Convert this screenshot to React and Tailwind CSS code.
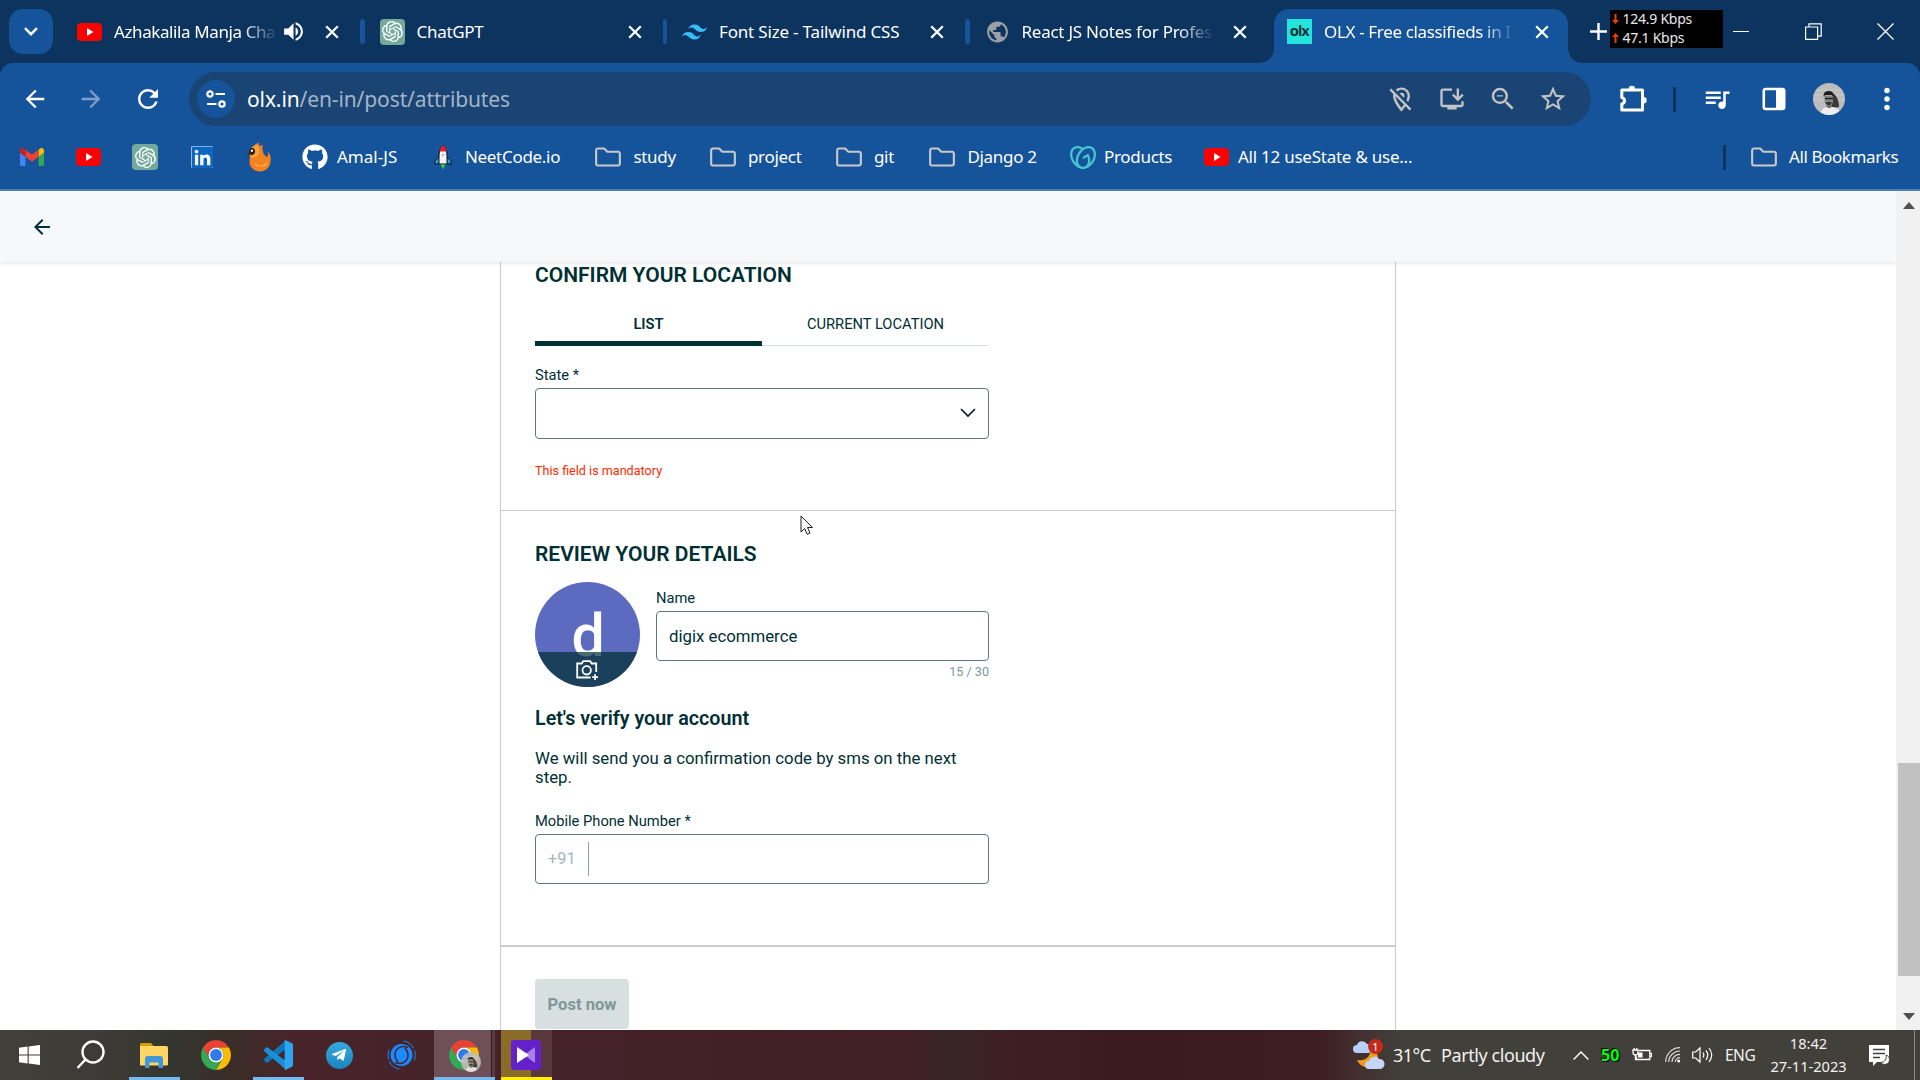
import React from "react";
import {
  MdArrowBack,
  MdArrowForward,
  MdRefresh,
  MdVolumeUp,
  MdOutlineLocationOff,
  MdInstallDesktop,
  MdZoomOut,
  MdStarBorder,
  MdQueueMusic,
  MdPublic,
  MdMoreVert,
} from "react-icons/md";
import { FaGithub, FaLinkedin, FaTelegramPlane } from "react-icons/fa";
import { SiOpenai, SiTailwindcss, SiGodaddy } from "react-icons/si";

/* ---------- shared icons ---------- */

const YouTube = () => (
  <svg width="25" height="18" viewBox="0 0 25 18">
    <rect width="25" height="18" rx="4" fill="#f00" />
    <path d="M10 5v8l6.5-4z" fill="#fff" />
  </svg>
);

const OpenAi = () => (
  <span className="flex size-[26px] items-center justify-center rounded-[4px] bg-[#74aa9c]">
    <SiOpenai size={21} color="#fff" />
  </span>
);

const Close = () => (
  <svg width="14" height="14" viewBox="0 0 14 14" stroke="#fff" strokeWidth="2.3">
    <path d="M1.2 1.2l11.6 11.6M12.8 1.2L1.2 12.8" />
  </svg>
);

const Folder = () => (
  <svg width="27" height="20" viewBox="0 0 27 20" fill="none" stroke="#c9c9c9" strokeWidth="2.2" strokeLinejoin="round">
    <path d="M1.2 3A1.8 1.8 0 0 1 3 1.200h6.5L12.800 4.500H24a1.800 1.800 0 0 1 1.800 1.800V17a1.800 1.800 0 0 1-1.800 1.800H3A1.800 1.800 0 0 1 1.200 17z" />
  </svg>
);

const Gmail = () => (
  <svg width="24" height="18" viewBox="52 42 88 66">
    <path fill="#4285f4" d="M58 108h14V74L52 59v43c0 3.320 2.690 6 6 6" />
    <path fill="#34a853" d="M120 108h14c3.320 0 6-2.690 6-6V59l-20 15" />
    <path fill="#fbbc04" d="M120 48v26l20-15v-8c0-7.420-8.470-11.650-14.400-7.200" />
    <path fill="#ea4335" d="M72 74V48l24 18 24-18v26L96 92" />
    <path fill="#c5221f" d="M52 51v8l20 15V48l-5.600-4.200c-5.940-4.450-14.400-.220-14.400 7.200" />
  </svg>
);

const FireBird = () => (
  <svg width="26" height="30" viewBox="0 -3 26 30">
    <path d="M3.500 9C3 4 7 0 13-2.500c-.5 1.500-.3 2.500.5 3.500 1.500-.8 2.500-.9 3.500-1-.8 1.500-.8 3.500-.2 5.500C17 9 19 11 21 12c1-1 1.500-3 1-5.500 2 2 3 5 2.700 8.500C24.500 22 20 26.500 14 26.500 8 26.500 3.500 22 3.500 17c0-2 1-5 0-8z" fill="#f58220" />
    <path d="M12 0C7 1 3 4 3.500 9l.7 3c3 1.500 7 0 8.500-3 1-2.200.5-5.500-.7-9z" fill="#f9a03f" />
    <path d="M4.500 3.500C7 2.200 9.500 4 9 7c-.4 2.300-2 3.300-3.800 3C3 9.300 2.500 5 4.500 3.500z" fill="#2b1a12" />
    <circle cx="6" cy="5.800" r="1.200" fill="#fff" />
    <path d="M.5 8.500L4 7l.3 4z" fill="#4a2c17" />
    <path d="M9 19c3 3 9 3 12-1" stroke="#fbb04a" strokeWidth="1.400" fill="none" />
  </svg>
);

const Rocket = () => (
  <svg width="18" height="26" viewBox="0 0 18 26">
    <path d="M5 13L1 17v3.500L5.500 19zM13 13l4 4v3.500L12.500 19z" fill="#22a7e8" stroke="#111" strokeWidth="1" />
    <path d="M9 1C6 4 5 8 5 12v8h8v-8c0-4-1-8-4-11z" fill="#f4f4f4" stroke="#111" strokeWidth="1" />
    <path d="M9 .8C7 3 6 5 5.500 7.500h7C12 5 11 3 9 .8z" fill="#e3222b" />
    <circle cx="9" cy="11" r="1.500" fill="#bcc7d0" />
    <path d="M6.500 20.500h5L9 25.500z" fill="#3ecb3a" />
  </svg>
);

const Person = ({ size }) => (
  <svg width={size} height={size} viewBox="0 0 32 32">
    <defs>
      <clipPath id={"face" + size}>
        <circle cx="16" cy="16" r="16" />
      </clipPath>
    </defs>
    <g clipPath={`url(#face${size})`}>
      <rect width="32" height="32" fill="#bcbcbc" />
      <path d="M0 7h32M0 12h32M0 17h32" stroke="#cacaca" strokeWidth="1.200" />
      <path d="M19 10c4 1 7 7 7 14l-7 1z" fill="#3a3a3a" />
      <path d="M7 32c.5-5 4-7.500 7-8h5c5 .5 8 3 9 8z" fill="#ededed" />
      <path d="M13.500 19h5.500v4.500c-1.500 2-4 2-5.500 0z" fill="#6b6b6b" />
      <path d="M11.500 12.500h8.500V18c0 3-2 4.500-4.200 4.500s-4.300-1.500-4.300-4.500z" fill="#8a8a8a" />
      <path d="M10.800 14c-.8-4 1.500-6 5-6s5.200 2 4.700 6l-1.500-2h-7z" fill="#1d1d1d" />
      <path d="M12 15.500h8" stroke="#222" strokeWidth="1.700" />
      <path d="M12.500 19.500c1.500 3.500 5 3.500 6.500 0l-3-.8z" fill="#333" />
    </g>
  </svg>
);

const Chrome = ({ size = 30 }) => (
  <svg width={size} height={size} viewBox="0 0 48 48">
    <path fill="#ea4335" d="M24 12h20.780A24 24 0 0 0 3.220 12L13.600 30A12 12 0 0 1 24 12z" />
    <path fill="#fbbc04" d="M34.400 30L24 48a24 24 0 0 0 20.780-36H24a12 12 0 0 1 10.400 18z" />
    <path fill="#34a853" d="M13.600 30L3.220 12A24 24 0 0 0 24 48l10.400-18a12 12 0 0 1-20.800 0z" />
    <circle cx="24" cy="24" r="12" fill="#fff" />
    <circle cx="24" cy="24" r="9.500" fill="#2f7bea" />
  </svg>
);

/* ---------- tab strip ---------- */

const Tab = ({ icon, title, sound, active, divider, fade, tracking = "tracking-[-0.3px]" }) => (
  <div className="relative flex h-full w-[302.5px] shrink-0 items-center pl-[17px]">
    {active && (
      <>
        <div className="absolute top-[9px] right-[5px] bottom-0 left-1 rounded-t-[15px] bg-[#15539a]" />
        <div className="absolute bottom-0 -left-2.5 size-3.5 bg-[radial-gradient(circle_at_top_left,transparent_13.5px,#15539a_14px)]" />
        <div className="absolute -right-[9px] bottom-0 size-3.5 bg-[radial-gradient(circle_at_top_right,transparent_13.5px,#15539a_14px)]" />
      </>
    )}
    <div className="relative flex w-[25px] shrink-0 justify-center">{icon}</div>
    <div
      className={
        "relative ml-3 shrink-0 text-[17px] leading-6 whitespace-nowrap " +
        tracking +
        (sound ? " w-[164px]" : " w-[192px]") +
        (fade ? " [mask-image:linear-gradient(to_right,#000_calc(100%_-_36px),transparent)]" : "")
      }
    >
      {title}
    </div>
    {sound && <MdVolumeUp size={25} className="ml-[3px] shrink-0" />}
    <div className="absolute right-[23.5px]">
      <Close />
    </div>
    {divider && <div className="absolute -right-0.5 h-[25px] w-[4.5px] rounded-sm bg-[#15539a]" />}
  </div>
);

const TabStrip = () => (
  <div className="flex h-[63px] items-center">
    <div className="ml-[9px] flex h-[45px] w-11 items-center justify-center rounded-[14px] bg-[#15539a]">
      <svg width="14" height="9" viewBox="0 0 14 9" fill="none" stroke="#fff" strokeWidth="2.400">
        <path d="M1 1.200l6 6 6-6" />
      </svg>
    </div>
    <div className="ml-[7px] flex h-full">
      <Tab icon={<YouTube />} title="Azhakalila Manja Cha" tracking="tracking-[-0.4px]" sound fade divider />
      <Tab icon={<OpenAi />} title="ChatGPT" divider />
      <Tab
        icon={<SiTailwindcss size={26} color="#38bdf8" />}
        title="Font Size - Tailwind CSS"
        tracking="tracking-[-0.18px]"
        divider
      />
      <Tab
        icon={<MdPublic size={28} color="#9aa0a6" />}
        title="React JS Notes for Profes"
        tracking="tracking-[-0.25px]"
        fade
      />
      <Tab
        icon={
          <span className="flex size-[25px] items-center justify-center bg-[#23e5db] pb-0.5 font-[Lato] text-[15px] leading-none font-black tracking-[-0.5px] text-[#002f34]">
            olx
          </span>
        }
        title="OLX - Free classifieds in I"
        tracking="tracking-[-0.35px]"
        active
        fade
      />
    </div>
    <svg width="17" height="17" viewBox="0 0 17 17" className="ml-[17px] shrink-0" stroke="#fff" strokeWidth="2.400">
      <path d="M8.500 0v17M0 8.500h17" />
    </svg>
    <div className="mt-[-5px] ml-[3px] flex h-[38px] w-[113px] shrink-0 flex-col justify-center bg-black pb-0.5 pl-0.5 text-[14px] leading-[19px] tracking-[-0.25px] text-[#e8e8e8]">
      <Speed value="124.9 Kbps" />
      <Speed value="47.1 Kbps" up />
    </div>
    <div className="ml-2.5 h-[1.5px] w-4 bg-white" />
    <svg width="17" height="17" viewBox="0 0 17 17" className="ml-14 shrink-0" fill="none" stroke="#fff" strokeWidth="1.200">
      <path d="M.6 4h12v12.400H.6zM4 4V.8h12.200v12.400h-3.400" />
    </svg>
    <svg width="17" height="17" viewBox="0 0 17 17" className="ml-[55px] shrink-0" stroke="#fff" strokeWidth="1.300">
      <path d="M.5.5l16 16M16.500.5l-16 16" />
    </svg>
  </div>
);

const Speed = ({ value, up }) => (
  <div className="flex items-center gap-1 whitespace-nowrap">
    <svg width="7" height="10" viewBox="0 0 7 10" className={up ? "rotate-180" : ""}>
      <path d="M2.500 0h2v6H7L3.500 10 0 6h2.500z" fill="#e8400c" />
    </svg>
    {value}
  </div>
);

/* ---------- toolbar ---------- */

const Cell = ({ children }) => <div className="flex w-14 shrink-0 items-center justify-center">{children}</div>;
const OmniCell = ({ children }) => (
  <div className="flex w-[50.6px] shrink-0 items-center justify-center text-[#c4c4c4]">{children}</div>
);

const Toolbar = () => (
  <div className="flex h-[54px] items-center pl-[7px]">
    <Cell>
      <MdArrowBack size={28} />
    </Cell>
    <Cell>
      <MdArrowForward size={28} className="text-[#7f9fc8]" />
    </Cell>
    <Cell>
      <MdRefresh size={30} className="ml-0.5" />
    </Cell>
    <div className="ml-3.5 flex h-full w-[1402px] shrink-0 items-center rounded-full bg-[#194474] pr-[12.7px] pl-2">
      <div className="flex size-[38px] items-center justify-center rounded-full bg-[#15539a]">
        <svg width="20" height="18" viewBox="0 0 20 18" fill="none" stroke="#fff" strokeWidth="2.200">
          <circle cx="4" cy="4" r="2.700" />
          <path d="M9.500 4H19M1 14h9.500" />
          <circle cx="16" cy="14" r="2.700" />
        </svg>
      </div>
      <div className="ml-3 flex-1 text-[21px] leading-7 tracking-[-0.12px] text-[#a3b4c8]">
        <span className="text-white">olx.in</span>/en-in/post/attributes
      </div>
      <OmniCell>
        <MdOutlineLocationOff size={29} />
      </OmniCell>
      <OmniCell>
        <MdInstallDesktop size={28} />
      </OmniCell>
      <OmniCell>
        <MdZoomOut size={30} className="ml-px" />
      </OmniCell>
      <OmniCell>
        <MdStarBorder size={30} />
      </OmniCell>
    </div>
    <div className="ml-3.5 flex h-full items-center">
      <Cell>
        <svg width="27" height="27" viewBox="0 0 27 27" fill="none" stroke="#fff" strokeWidth="3" strokeLinejoin="round" className="-mt-0.5">
          <path d="M1.800 5h20.700V25H1.800v-6c3.600-.8 3.600-5.600 0-6.400z" />
          <path d="M8.700 4a3.200 3.200 0 0 1 6.400 0zM23.500 12a3.200 3.200 0 0 1 0 6.400z" fill="#fff" stroke="none" />
        </svg>
      </Cell>
      <div className="ml-3 h-[25px] w-[2.5px] bg-[#0c345f]" />
      <div className="ml-[13.5px] flex">
        <Cell>
          <MdQueueMusic size={30} />
        </Cell>
        <Cell>
          <svg width="24" height="24" viewBox="0 0 24 24" fill="none" stroke="#fff" strokeWidth="2.600" className="-mt-px ml-px">
            <rect x="1.800" y="2" width="20.400" height="20" rx="2" />
            <path d="M14 2h7v20h-7z" fill="#fff" stroke="none" />
          </svg>
        </Cell>
        <Cell>
          <Person size={32} />
        </Cell>
        <Cell>
          <MdMoreVert size={34} className="ml-[3px]" />
        </Cell>
      </div>
    </div>
  </div>
);

/* ---------- bookmarks ---------- */

const IconMark = ({ children }) => (
  <div className="flex w-[56.7px] shrink-0 items-center justify-center">{children}</div>
);
const Mark = ({ icon, label, className }) => (
  <div className={"flex shrink-0 items-center whitespace-nowrap " + className}>
    <span className="flex w-[26px] shrink-0 justify-center">{icon}</span>
    <span className="-mt-px">{label}</span>
  </div>
);

const Bookmarks = () => (
  <div className="flex h-[62px] items-center pl-[3.7px] text-[17px] leading-6 tracking-[-0.3px]">
    <IconMark>
      <Gmail />
    </IconMark>
    <IconMark>
      <YouTube />
    </IconMark>
    <IconMark>
      <OpenAi />
    </IconMark>
    <IconMark>
      <span className="flex size-[22px] items-center justify-center overflow-hidden rounded-[2px] bg-white">
        <FaLinkedin size={25} color="#0a66c2" className="shrink-0" />
      </span>
    </IconMark>
    <IconMark>
      <FireBird />
    </IconMark>
    <Mark className="ml-[14.8px] w-[128px] gap-[9px] tracking-[0.05px]" icon={<FaGithub size={26} />} label="Amal-JS" />
    <Mark className="w-[165.5px] gap-[9px]" icon={<Rocket />} label="NeetCode.io" />
    <Mark className="w-[114.5px] gap-3" icon={<Folder />} label="study" />
    <Mark className="w-[126px] gap-3" icon={<Folder />} label="project" />
    <Mark className="w-[93.5px] gap-3" icon={<Folder />} label="git" />
    <Mark className="w-[140.5px] gap-3" icon={<Folder />} label="Django 2" />
    <Mark className="w-[134px] gap-2" icon={<SiGodaddy size={27} color="#45c4d0" />} label="Products" />
    <Mark className="w-[220px] gap-2 tracking-[-0.24px]" icon={<YouTube />} label="All 12 useState & use..." />
    <div className="ml-auto h-[25px] w-[3px] bg-[#0c345f]" />
    <Mark className="ml-[25px] w-[169px] gap-3 tracking-[-0.4px]" icon={<Folder />} label="All Bookmarks" />
  </div>
);

/* ---------- page ---------- */

const Field = ({ label, children, className = "" }) => (
  <label className={"block " + className}>
    <span className="block h-[18px] text-[14.7px] leading-[18px]">{label}</span>
    {children}
  </label>
);

const Form = () => (
  <div className="ml-[500px] h-full w-[896px] border-x border-[#cbcdcd]">
    <section className="h-[249px] border-b border-[#cbcdcd] pt-px pl-[34px]">
      <h2 className="text-[21px] leading-6 font-semibold">CONFIRM YOUR LOCATION</h2>
      <div className="mt-[27px] flex w-[454px] text-center text-[14.7px] leading-5">
        <div className="h-8 w-[227px] border-b-5 border-[#002f34] font-semibold">LIST</div>
        <div className="h-8 w-[227px] border-b border-[#d8dfe0]">CURRENT LOCATION</div>
      </div>
      <Field label="State *" className="mt-5">
        <div className="mt-1 flex h-[51px] w-[454px] items-center justify-end rounded border border-[#5f7a7e] pr-3">
          <svg width="16" height="10" viewBox="0 0 16 10" fill="none" stroke="#111c1e" strokeWidth="1.700" className="mt-[-2px]">
            <path d="M1 1l7 7 7-7" />
          </svg>
        </div>
      </Field>
      <p className="mt-6 text-[12.6px] leading-4 text-[#ff2800]">This field is mandatory</p>
    </section>

    <section className="h-[436px] border-b-2 border-[#cbcdcd] pt-[31px] pl-[34px]">
      <h2 className="text-[21px] leading-6 font-semibold">REVIEW YOUR DETAILS</h2>
      <div className="mt-4 flex h-[105px] w-[454px] gap-4">
        <div className="relative size-[105px] shrink-0 overflow-hidden rounded-full bg-[#5c6bc0]">
          <div className="pt-[19px] pl-px text-center text-[59px] leading-[70px] font-medium text-white">d</div>
          <div className="absolute inset-x-0 bottom-0 flex h-[35px] justify-center bg-[#1b405c] pt-2">
            <svg width="23" height="21" viewBox="0 0 23 21" fill="none" stroke="#fff" strokeWidth="1.800">
              <path d="M14.500 17.500H1.200V3.500h4.500L7.200 1.200h7L15.700 3.500h4.500V12" />
              <circle cx="10.700" cy="10.300" r="4.200" />
              <path d="M16.200 17.200H22M19.100 14.300v5.800" />
            </svg>
          </div>
          <div className="absolute inset-x-0 top-[70px] h-[6px] overflow-hidden opacity-40">
            <div className="-mt-[51px] pl-px text-center text-[59px] leading-[70px] font-medium text-[#8fae98]">d</div>
          </div>
        </div>
        <div className="flex-1 pt-[7px]">
          <Field label="Name">
            <div className="mt-1 flex h-[50px] items-center rounded border border-[#5f7a7e] pt-0.5 pl-3 text-[16.8px]">
              digix ecommerce
            </div>
          </Field>
          <p className="mt-[3px] text-right text-[12.6px] leading-4 text-[#7f9799]">15 / 30</p>
        </div>
      </div>
      <h3 className="mt-5 text-[19.7px] leading-6 font-semibold">Let's verify your account</h3>
      <p className="mt-[18px] h-[39px] w-[440px] text-[16.8px] leading-[19px]">
        We will send you a confirmation code by sms on the next
        <br />
        step.
      </p>
      <Field label="Mobile Phone Number *" className="mt-6">
        <div className="mt-1 flex h-[50px] w-[454px] items-center rounded border border-[#5f7a7e] pl-3 text-[16.3px] text-[#a5b8ba]">
          <span className="w-10">+91</span>
          <span className="h-[34px] w-px bg-[#8fa3a6]" />
        </div>
      </Field>
    </section>

    <section className="pt-8 pl-[34px]">
      <button className="block h-[50px] w-[94px] rounded bg-[#d8dfe0] pt-0.5 text-[16.6px] font-bold text-[#7f9799]">
        Post now
      </button>
    </section>
  </div>
);

const Scrollbar = () => (
  <div className="flex w-6 shrink-0 flex-col items-center bg-[#f1f1f1] pt-[11px] pb-2.5 pl-px">
    <svg width="12" height="7" viewBox="0 0 12 7">
      <path d="M6 0l6 7H0z" fill="#505050" />
    </svg>
    <div className="mt-[554px] h-[213px] w-[22px] bg-[#c1c1c1]" />
    <svg width="12" height="7" viewBox="0 0 12 7" className="mt-auto">
      <path d="M6 7L0 0h12z" fill="#505050" />
    </svg>
  </div>
);

/* ---------- taskbar ---------- */

const Task = ({ children, open, className = "w-[62px]" }) => (
  <div className={"relative flex h-full shrink-0 items-center justify-center " + className}>
    {children}
    {open && <div className="absolute bottom-0 h-[3px] w-[51px] bg-[#76b9ed]" />}
  </div>
);

const Taskbar = () => (
  <div className="flex h-[50px] items-center bg-[linear-gradient(90deg,#42403b_0px,#3d3b37_100px,#34352f_180px,#3b2c27_235px,#48242a_290px,#452229_560px,#421e25_900px,#372523_950px,#3f1f23_1010px,#3b1b20_1120px,#3d1d22_1320px,#42302f_1360px,#42403b_1400px,#42403b_1920px)] font-['Noto_Sans','Liberation_Sans',sans-serif] text-[#f2f2f2]">
    <Task className="w-[60px]">
      <svg width="21" height="20" viewBox="0 0 21 20" fill="#fff" className="-ml-px">
        <path d="M0 2.800L8.600 1.600v7.900H0zM9.700 1.400L21 0v9.500H9.700zM0 10.500h8.600v7.900L0 17.200zM9.700 10.500H21V20L9.700 18.600z" />
      </svg>
    </Task>
    <Task className="w-[61px]">
      <svg width="29" height="30" viewBox="0 0 29 30" fill="none" stroke="#fff" strokeWidth="2.400" className="-ml-px">
        <circle cx="17" cy="12" r="10.500" />
        <path d="M9.500 19.500L1.500 28" />
      </svg>
    </Task>
    <Task open className="w-[66px]">
      <svg width="28" height="25" viewBox="0 0 28 25">
        <path d="M0 1.500Q0 0 1.500 0H11l2.500 3H0z" fill="#d99a08" />
        <path d="M0 3h26.500q1.500 0 1.500 1.500v17q0 1-1.500 1H0z" fill="#ffd566" />
        <path d="M5 25v-9q0-3 3-3h12q3 0 3 3v9h-4.500v-5.500h-9V25z" fill="#3f97d8" />
      </svg>
    </Task>
    <Task className="w-[58px]">
      <Chrome />
    </Task>
    <Task open className="w-[66px]">
      <svg width="30" height="30" viewBox="0 0 100 100">
        <path d="M76 2L5 62q-4 4 0 8l5 5q3 2 7-1l59-44z" fill="#0f78bd" />
        <path d="M76 98L5 38q-4-4 0-8l5-5q3-2 7 1l59 44z" fill="#1a8fd8" />
        <path d="M74 0l23 11q3 2 3 6v66q0 4-3 6L74 100q-2-1-2-5V5q0-4 2-5z" fill="#2ba6f0" />
      </svg>
    </Task>
    <Task className="w-[57px]">
      <span className="flex size-[27px] items-center justify-center rounded-full bg-linear-to-b from-[#35aadf] to-[#1b85bb]">
        <FaTelegramPlane size={16} color="#fff" className="-ml-0.5" />
      </span>
    </Task>
    <Task className="w-[66px]">
      <svg width="29" height="30" viewBox="0 0 29 30" fill="none" strokeLinecap="round">
        <circle cx="14.500" cy="15" r="11" fill="#1c8bff" />
        <path d="M2 10C1 13 .8 16 1.500 19M17 1c4 .7 7.500 3.200 9.500 7M27.500 20c1-3 1-6 .3-9M12 29c-4-.7-7.500-3.200-9.500-7" stroke="#1c8bff" strokeWidth="1" />
        <path d="M20.500 7.500C14 4.500 7.500 9 8 15.500c.2 3 1.500 4.800 3 5.800" stroke="#47222a" strokeWidth="1.400" />
        <path d="M8.500 22.500C15 25.500 21.500 21 21 14.500c-.2-3-1.500-4.800-3-5.800" stroke="#47222a" strokeWidth="1.400" />
      </svg>
    </Task>
    <div className="relative flex h-full w-[61px] border-b-3 border-[#76b9ed]">
      <div className="relative flex w-[57px] items-center justify-center bg-[#6f5058] pt-[3px] pl-0.5">
        <Chrome />
        <div className="absolute top-[22px] left-[27px] opacity-90">
          <Person size={20} />
        </div>
      </div>
      <div className="w-1 border-l border-[#2c1a1d] bg-[#5a3c42]" />
    </div>
    <div className="relative ml-1.5 flex h-full w-[51px] items-center border-b-3 border-[#fff100] bg-[linear-gradient(90deg,#8a6c28_30px,#5a373d_30px)] pt-[3px] pl-2.5">
      <span className="flex size-[30px] items-center justify-center rounded-[3px] bg-[#6322c9]">
        <svg width="18" height="16" viewBox="0 0 18 16">
          <path d="M18 0v16L7 8z" fill="#a682e8" />
          <path d="M0 0l12 8-12 8z" fill="#fff" />
        </svg>
      </span>
    </div>

    <div className="relative ml-[801px] size-8 shrink-0">
      <svg width="32" height="30" viewBox="0 0 32 30" className="mt-px">
        <path d="M17 8c2 7-4 14-13 12 3 7 12 10 18 5 5-4 5-12-5-17z" fill="#f39a1f" />
        <path d="M4 13a4 4 0 0 1 0-8 5.500 5.500 0 0 1 10-1 4.500 4.500 0 0 1 1 9z" fill="#b9cff5" />
        <path d="M16 29a4 4 0 0 1 0-8 5.500 5.500 0 0 1 10-2 5 5 0 0 1 1 10z" fill="#c3d6f7" />
      </svg>
      <span className="absolute top-0 right-0.5 flex size-[15px] items-center justify-center rounded-full bg-[#c42b1c] text-[11px] leading-none text-white">
        1
      </span>
    </div>
    <div className="ml-2 w-[48px] shrink-0 text-[18px] tracking-[-0.5px]">31°C</div>
    <div className="w-[132px] shrink-0 text-[18px] tracking-[-0.42px] whitespace-nowrap">Partly cloudy</div>
    <svg width="16" height="9" viewBox="0 0 16 9" fill="none" stroke="#fff" strokeWidth="1.400" className="shrink-0">
      <path d="M.6 8.500L8 1l7.400 7.500" />
    </svg>
    <div className="ml-3 w-[31px] shrink-0 text-[16px] leading-5 font-bold text-[#0f0] [text-shadow:1px_1px_0_#000,-1px_-1px_0_#000]">
      50
    </div>
    <svg width="20" height="14" viewBox="0 0 20 14" fill="none" stroke="#fff" strokeWidth="1.300" className="shrink-0">
      <path d="M7 2.500h10.800v9H4.500V8.500M18 5.500h1.500v3H18" />
      <path d="M6 4.500h4.500v5H6z" fill="#fff" stroke="none" />
      <path d="M1 2h5v2.500a2.500 2.500 0 0 1-5 0zM2.200 0v2M4.800 0v2M3.500 7v4.500h1" />
    </svg>
    <svg width="16" height="16" viewBox="0 0 16 16" fill="none" stroke="#d8d8d8" strokeWidth="1.200" className="ml-[13px] shrink-0">
      <path d="M.7 15C.7 7 7 .7 15 .7M3.700 15C3.700 9 9 4 15 4M7 15c0-4.500 3.500-7.700 8-7.700M10.300 15c0-2.500 2-4.300 4.700-4.300" />
      <circle cx="13.700" cy="14" r="1.500" fill="#fff" stroke="none" />
    </svg>
    <svg width="21" height="18" viewBox="0 0 21 18" fill="none" stroke="#fff" strokeWidth="1.200" className="ml-[11px] shrink-0">
      <path d="M.7 6h3L8 2v14l-4.300-4h-3zM11 6.500c1 1.500 1 3.500 0 5M14 4.300c2.200 3 2.200 6.500 0 9.500M17 2c3.500 4.500 3.500 9.500 0 14" />
    </svg>
    <div className="mt-0.5 ml-3 w-[42px] shrink-0 text-[15.5px] tracking-[-0.5px]">ENG</div>
    <div className="w-[82px] shrink-0 pl-px text-center text-[14.6px] leading-[23px]">
      <div>18:42</div>
      <div>27-11-2023</div>
    </div>
    <svg width="21" height="22" viewBox="0 0 21 22" className="mt-0.5 ml-5 shrink-0">
      <path d="M0 0h20v17H8l-4 4v-4H0z" fill="#fff" />
      <path d="M4 4.500h12M4 8.500h12M4 12.500h7" stroke="#42403b" strokeWidth="1.300" />
      <path d="M17 10c1 4-1 7-5.500 7.500 3 3.500 9 2 9-3 0-2-1.500-4-3.500-4.500z" fill="#fff" stroke="#42403b" />
    </svg>
    <div className="mr-[5px] ml-auto h-full w-px bg-[#8a8884]" />
  </div>
);

export default function App() {
  return (
    <div className="h-[1080px] w-[1920px] overflow-hidden bg-white">
      <header className="bg-[#0c345f] font-['Noto_Sans','Liberation_Sans',sans-serif] text-white">
        <TabStrip />
        <div className="h-32 rounded-t-[13px] border-b-2 border-[#4a7dbb] bg-[#15539a] pt-[9px]">
          <Toolbar />
          <Bookmarks />
        </div>
      </header>
      <main className="flex h-[839px] font-[Roboto,'Liberation_Sans',sans-serif] text-[#002f34]">
        <div className="relative flex w-[1896px] flex-col overflow-hidden">
          <div className="relative z-10 flex h-[71px] shrink-0 items-center bg-[#f7f8f9] pl-[30px] shadow-[0_1px_4px_rgba(0,0,0,0.12)]">
            <MdArrowBack size={24} />
          </div>
          <Form />
          <svg width="14" height="21" viewBox="0 0 14 21" className="absolute top-[324px] left-[800px]">
            <path d="M1 1v16l3.700-3.500 2.500 5.800 2.800-1.200-2.500-5.600h5z" fill="#fff" stroke="#1a1a2a" strokeWidth="1" />
          </svg>
        </div>
        <Scrollbar />
      </main>
      <Taskbar />
    </div>
  );
}
